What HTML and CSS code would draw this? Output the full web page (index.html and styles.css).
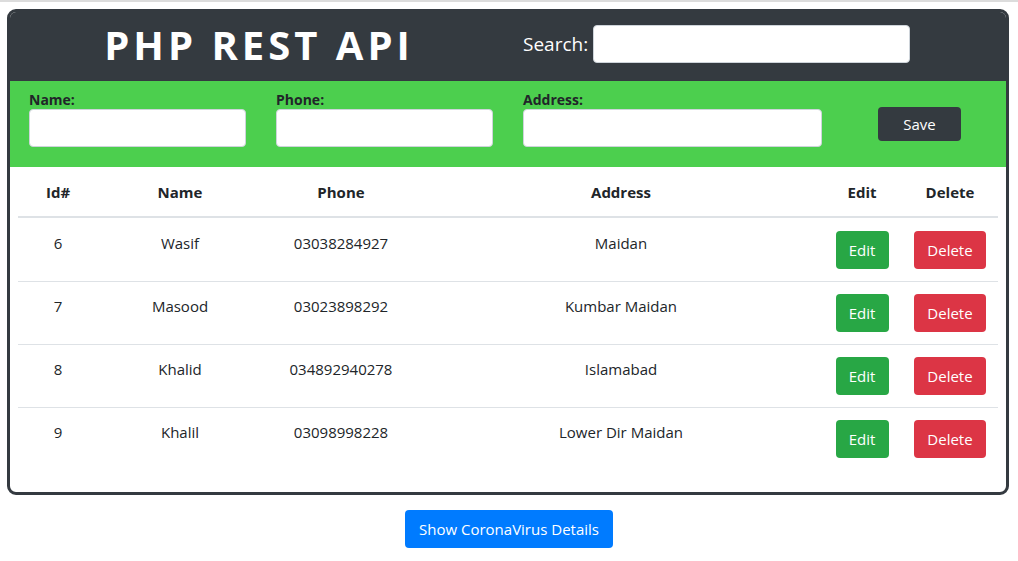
FILE: index.html
```html
<!DOCTYPE html>
<html>
<head>
<meta charset="utf-8">
<link rel="stylesheet" href="styles.css">
</head>
<body>
<div class="topline"></div>
<div class="card">
  <div class="header">
    <div class="title-col"><h1 class="title">PHP REST API</h1></div>
    <div class="search-col">
      <label class="search-label">Search:</label>
      <input class="search-input" type="text">
    </div>
  </div>
  <div class="form-band">
    <div class="field field-name">
      <label class="flabel">Name:</label>
      <input class="finput" type="text">
    </div>
    <div class="field field-phone">
      <label class="flabel">Phone:</label>
      <input class="finput" type="text">
    </div>
    <div class="field field-address">
      <label class="flabel">Address:</label>
      <input class="finput" type="text">
    </div>
    <button class="btn btn-dark save">Save</button>
  </div>
  <div class="table-wrap">
    <table class="table">
      <colgroup>
        <col class="c-id"><col class="c-name"><col class="c-phone"><col class="c-addr"><col class="c-edit"><col class="c-del">
      </colgroup>
      <thead>
        <tr><th>Id#</th><th>Name</th><th>Phone</th><th>Address</th><th>Edit</th><th>Delete</th></tr>
      </thead>
      <tbody>
        <tr><td>6</td><td>Wasif</td><td>03038284927</td><td>Maidan</td><td><button class="btn btn-success">Edit</button></td><td><button class="btn btn-danger">Delete</button></td></tr>
        <tr><td>7</td><td>Masood</td><td>03023898292</td><td>Kumbar Maidan</td><td><button class="btn btn-success">Edit</button></td><td><button class="btn btn-danger">Delete</button></td></tr>
        <tr><td>8</td><td>Khalid</td><td>034892940278</td><td>Islamabad</td><td><button class="btn btn-success">Edit</button></td><td><button class="btn btn-danger">Delete</button></td></tr>
        <tr><td>9</td><td>Khalil</td><td>03098998228</td><td>Lower Dir Maidan</td><td><button class="btn btn-success">Edit</button></td><td><button class="btn btn-danger">Delete</button></td></tr>
      </tbody>
    </table>
  </div>
</div>
<div class="footer">
  <button class="btn btn-primary corona">Show CoronaVirus Details</button>
</div>
</body>
</html>
```
FILE: styles.css
```css
* { box-sizing: border-box; }
html, body { margin: 0; padding: 0; background: #fff; }
body {
  font-family: "Open Sans", "Noto Sans", "Liberation Sans", sans-serif;
  font-size: 15px;
  color: #212529;
}
.topline { height: 2px; background: #dcdcdc; }
.card {
  margin: 7px 9px 0 7px;
  border: 3px solid #343a40;
  border-radius: 9px;
  overflow: hidden;
}
.header {
  background: #343a40;
  height: 69px;
  display: grid;
  grid-template-columns: 498px 1fr;
  align-items: center;
}
.title-col { text-align: center; }
.title {
  margin: 0;
  color: #fff;
  font-size: 40px;
  font-weight: 700;
  letter-spacing: 4px;
  line-height: 1;
  padding-bottom: 4px;
}
.search-col {
  padding-left: 15px;
  display: flex;
  align-items: center;
  padding-bottom: 6px;
}
.search-label { color: #fff; font-size: 19px; margin-right: 5px; }
.search-input {
  width: 317px;
  height: 38px;
  border: 1px solid #ced4da;
  border-radius: 4px;
  background: #fff;
}
.form-band {
  background: #4ccf4e;
  height: 86px;
  padding: 9px 0 0 19px;
  display: flex;
  align-items: flex-start;
}
.field { display: flex; flex-direction: column; }
.field-name, .field-phone { width: 217px; margin-right: 30px; }
.field-address { width: 299px; }
.flabel { font-weight: 700; font-size: 14px; line-height: 20px; height: 19px; }
.finput {
  height: 38px;
  width: 100%;
  border: 1px solid #ced4da;
  border-radius: 4px;
  background: #fff;
}
.btn {
  font-family: inherit;
  font-size: 15px;
  border: none;
  border-radius: 4px;
  color: #fff;
  height: 38px;
  padding: 0 12px;
  cursor: pointer;
}
.btn-dark { background: #343a40; }
.btn-success { background: #28a745; }
.btn-danger { background: #dc3545; }
.btn-primary { background: #007bff; }
.save { width: 83px; height: 34px; margin-left: 56px; margin-top: 17px; }
.table-wrap { padding: 0 8px 22px 8px; }
.table {
  width: 100%;
  border-collapse: collapse;
  table-layout: fixed;
}
.c-id { width: 80px; }
.c-name { width: 164px; }
.c-phone { width: 158px; }
.c-addr { width: 402px; }
.c-edit { width: 80px; }
.c-del { width: 96px; }
.table th {
  font-weight: 700;
  text-align: center;
  padding: 13px 0 12px 0;
  line-height: 24px;
  border-bottom: 2px solid #dee2e6;
}
.table td {
  text-align: center;
  vertical-align: top;
  padding: 12px 0;
  line-height: 24px;
  border-top: 1px solid #dee2e6;
}
.table tbody tr:first-child td { border-top: none; padding-top: 13px; }
.table td .btn-success { width: 53px; padding: 0; }
.table td .btn-danger { width: 72px; padding: 0; }
.footer { display: flex; justify-content: center; padding-top: 15px; }
.corona { width: 208px; padding: 0; }
```
